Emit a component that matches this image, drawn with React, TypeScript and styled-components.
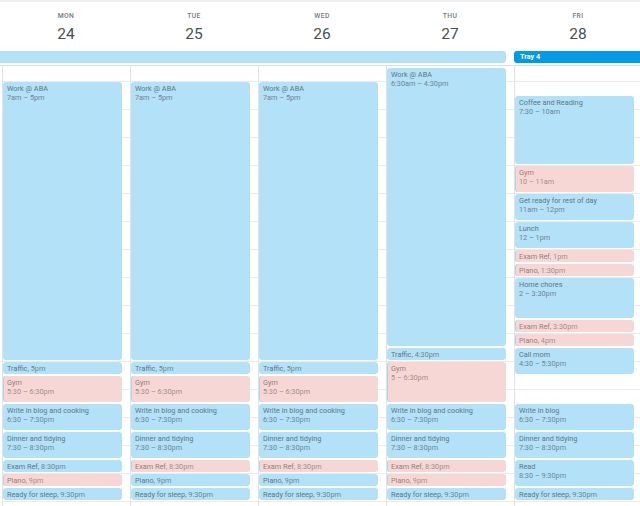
import React from "react";
import styled, { createGlobalStyle, css } from "styled-components";

type Tone = "blue" | "pink";

interface CalEvent {
  title: string;
  time: string;
  start: number;
  end: number;
  tone: Tone;
}

interface Day {
  name: string;
  date: number;
  events: CalEvent[];
}

const HOUR = 28;

// grid line for a given hour: 1px row before 6:30, then half-hour rows
const line = (t: number) => Math.round(2 * t - 11);

const GlobalStyle = createGlobalStyle`
  html, body {
    margin: 0;
    padding: 0;
    background: #fff;
  }
  body {
    font-family: Roboto, "Noto Sans", "Liberation Sans", sans-serif;
  }
`;

const Page = styled.div`
  width: 640px;
  height: 506px;
  overflow: hidden;
  background: #fff;
`;

const Header = styled.div`
  display: grid;
  grid-template-columns: repeat(5, 128px);
  padding-left: 2px;
  height: 49px;
  border-top: 2px solid #efefef;
`;

const DayHead = styled.div`
  display: flex;
  flex-direction: column;
  align-items: center;
  padding-top: 9px;
`;

const DayName = styled.div`
  font-size: 6.8px;
  line-height: 10px;
  font-weight: 500;
  letter-spacing: 0.4px;
  color: #757a7e;
`;

const DayNumber = styled.div`
  margin-top: 3px;
  font-size: 15.5px;
  line-height: 20px;
  color: #4a4e51;
`;

const AllDayRow = styled.div`
  display: grid;
  grid-template-columns: repeat(5, 128px);
  padding-left: 2px;
  height: 12px;
  padding-bottom: 2px;
  border-bottom: 1px solid #dadce0;
`;

const AllDayBar = styled.div`
  grid-column: 1 / 5;
  margin-left: -2px;
  margin-right: 8px;
  background: #b3e1f7;
  border-radius: 0 3px 3px 0;
`;

const AllDayEvent = styled.div`
  grid-column: 5;
  margin-right: -20px;
  background: #039be5;
  border-radius: 3px;
  color: #fff;
  font-size: 7.2px;
  font-weight: 700;
  line-height: 12px;
  padding-left: 6px;
`;

const Grid = styled.div`
  display: grid;
  grid-template-columns: repeat(5, 128px);
  padding-left: 2px;
  height: 440px;
  overflow: hidden;
`;

const DayColumn = styled.div`
  display: grid;
  grid-template-rows: 1px 14px repeat(34, 14px);
  align-content: start;
  border-left: 1px solid #e2e2e2;
  background-image: linear-gradient(#ebebeb 1px, transparent 1px);
  background-size: 100% ${HOUR}px;
  background-position: 0 15px;
`;

const tones = {
  blue: css`
    background: #b3e1f7;
    --title: #5c7886;
    --time: #6c8795;
  `,
  pink: css`
    background: #f7d7d5;
    box-shadow: inset 1px 0 0 #a3d8f1;
    --title: #987e7c;
    --time: #a68d8b;
  `,
};

const EventBox = styled.div<{ $start: number; $end: number; $tone: Tone }>`
  grid-column: 1;
  grid-row: ${(p) => line(p.$start)} / ${(p) => line(p.$end)};
  margin: 1px 0;
  width: 119px;
  box-sizing: border-box;
  border-radius: 3px;
  padding: 2px 4px 0 4px;
  overflow: hidden;
  white-space: nowrap;
  font-size: 7.3px;
  line-height: 9px;
  ${(p) => tones[p.$tone]}
`;

const Title = styled.span`
  color: var(--title);
`;

const Time = styled.span`
  color: var(--time);
`;

const Line = styled.div``;

const ev = (
  title: string,
  time: string,
  start: number,
  end: number,
  tone: Tone = "blue"
): CalEvent => ({ title, time, start, end, tone });

const evening = (examTone: Tone, pianoTone: Tone): CalEvent[] => [
  ev("Write in blog and cooking", "6:30 – 7:30pm", 18.5, 19.5),
  ev("Dinner and tidying", "7:30 – 8:30pm", 19.5, 20.5),
  ev("Exam Ref", "8:30pm", 20.5, 21, examTone),
  ev("Piano", "9pm", 21, 21.5, pianoTone),
  ev("Ready for sleep", "9:30pm", 21.5, 22),
];

const workday = (examTone: Tone, pianoTone: Tone): CalEvent[] => [
  ev("Work @ ABA", "7am – 5pm", 7, 17),
  ev("Traffic", "5pm", 17, 17.5),
  ev("Gym", "5:30 – 6:30pm", 17.5, 18.5, "pink"),
  ...evening(examTone, pianoTone),
];

const days: Day[] = [
  { name: "MON", date: 24, events: workday("blue", "pink") },
  { name: "TUE", date: 25, events: workday("pink", "blue") },
  { name: "WED", date: 26, events: workday("pink", "blue") },
  {
    name: "THU",
    date: 27,
    events: [
      ev("Work @ ABA", "6:30am – 4:30pm", 6.5, 16.5),
      ev("Traffic", "4:30pm", 16.5, 17),
      ev("Gym", "5 – 6:30pm", 17, 18.5, "pink"),
      ...evening("pink", "pink"),
    ],
  },
  {
    name: "FRI",
    date: 28,
    events: [
      ev("Coffee and Reading", "7:30 – 10am", 7.5, 10),
      ev("Gym", "10 – 11am", 10, 11, "pink"),
      ev("Get ready for rest of day", "11am – 12pm", 11, 12),
      ev("Lunch", "12 – 1pm", 12, 13),
      ev("Exam Ref", "1pm", 13, 13.5, "pink"),
      ev("Piano", "1:30pm", 13.5, 14, "pink"),
      ev("Home chores", "2 – 3:30pm", 14, 15.5),
      ev("Exam Ref", "3:30pm", 15.5, 16, "pink"),
      ev("Piano", "4pm", 16, 16.5, "pink"),
      ev("Call mom", "4:30 – 5:30pm", 16.5, 17.5),
      ev("Write in blog", "6:30 – 7:30pm", 18.5, 19.5),
      ev("Dinner and tidying", "7:30 – 8:30pm", 19.5, 20.5),
      ev("Read", "8:30 – 9:30pm", 20.5, 21.5),
      ev("Ready for sleep", "9:30pm", 21.5, 22),
    ],
  },
];

const EventCard: React.FC<{ event: CalEvent }> = ({ event }) => {
  const short = event.end - event.start <= 0.5;
  return (
    <EventBox $start={event.start} $end={event.end} $tone={event.tone}>
      {short ? (
        <Line>
          <Title>{event.title},</Title> <Time>{event.time}</Time>
        </Line>
      ) : (
        <>
          <Line>
            <Title>{event.title}</Title>
          </Line>
          <Line>
            <Time>{event.time}</Time>
          </Line>
        </>
      )}
    </EventBox>
  );
};

export default function App() {
  return (
    <Page>
      <GlobalStyle />
      <Header>
        {days.map((d) => (
          <DayHead key={d.name}>
            <DayName>{d.name}</DayName>
            <DayNumber>{d.date}</DayNumber>
          </DayHead>
        ))}
      </Header>
      <AllDayRow>
        <AllDayBar />
        <AllDayEvent>Tray 4</AllDayEvent>
      </AllDayRow>
      <Grid>
        {days.map((d) => (
          <DayColumn key={d.name}>
            {d.events.map((e, i) => (
              <EventCard key={i} event={e} />
            ))}
          </DayColumn>
        ))}
      </Grid>
    </Page>
  );
}
